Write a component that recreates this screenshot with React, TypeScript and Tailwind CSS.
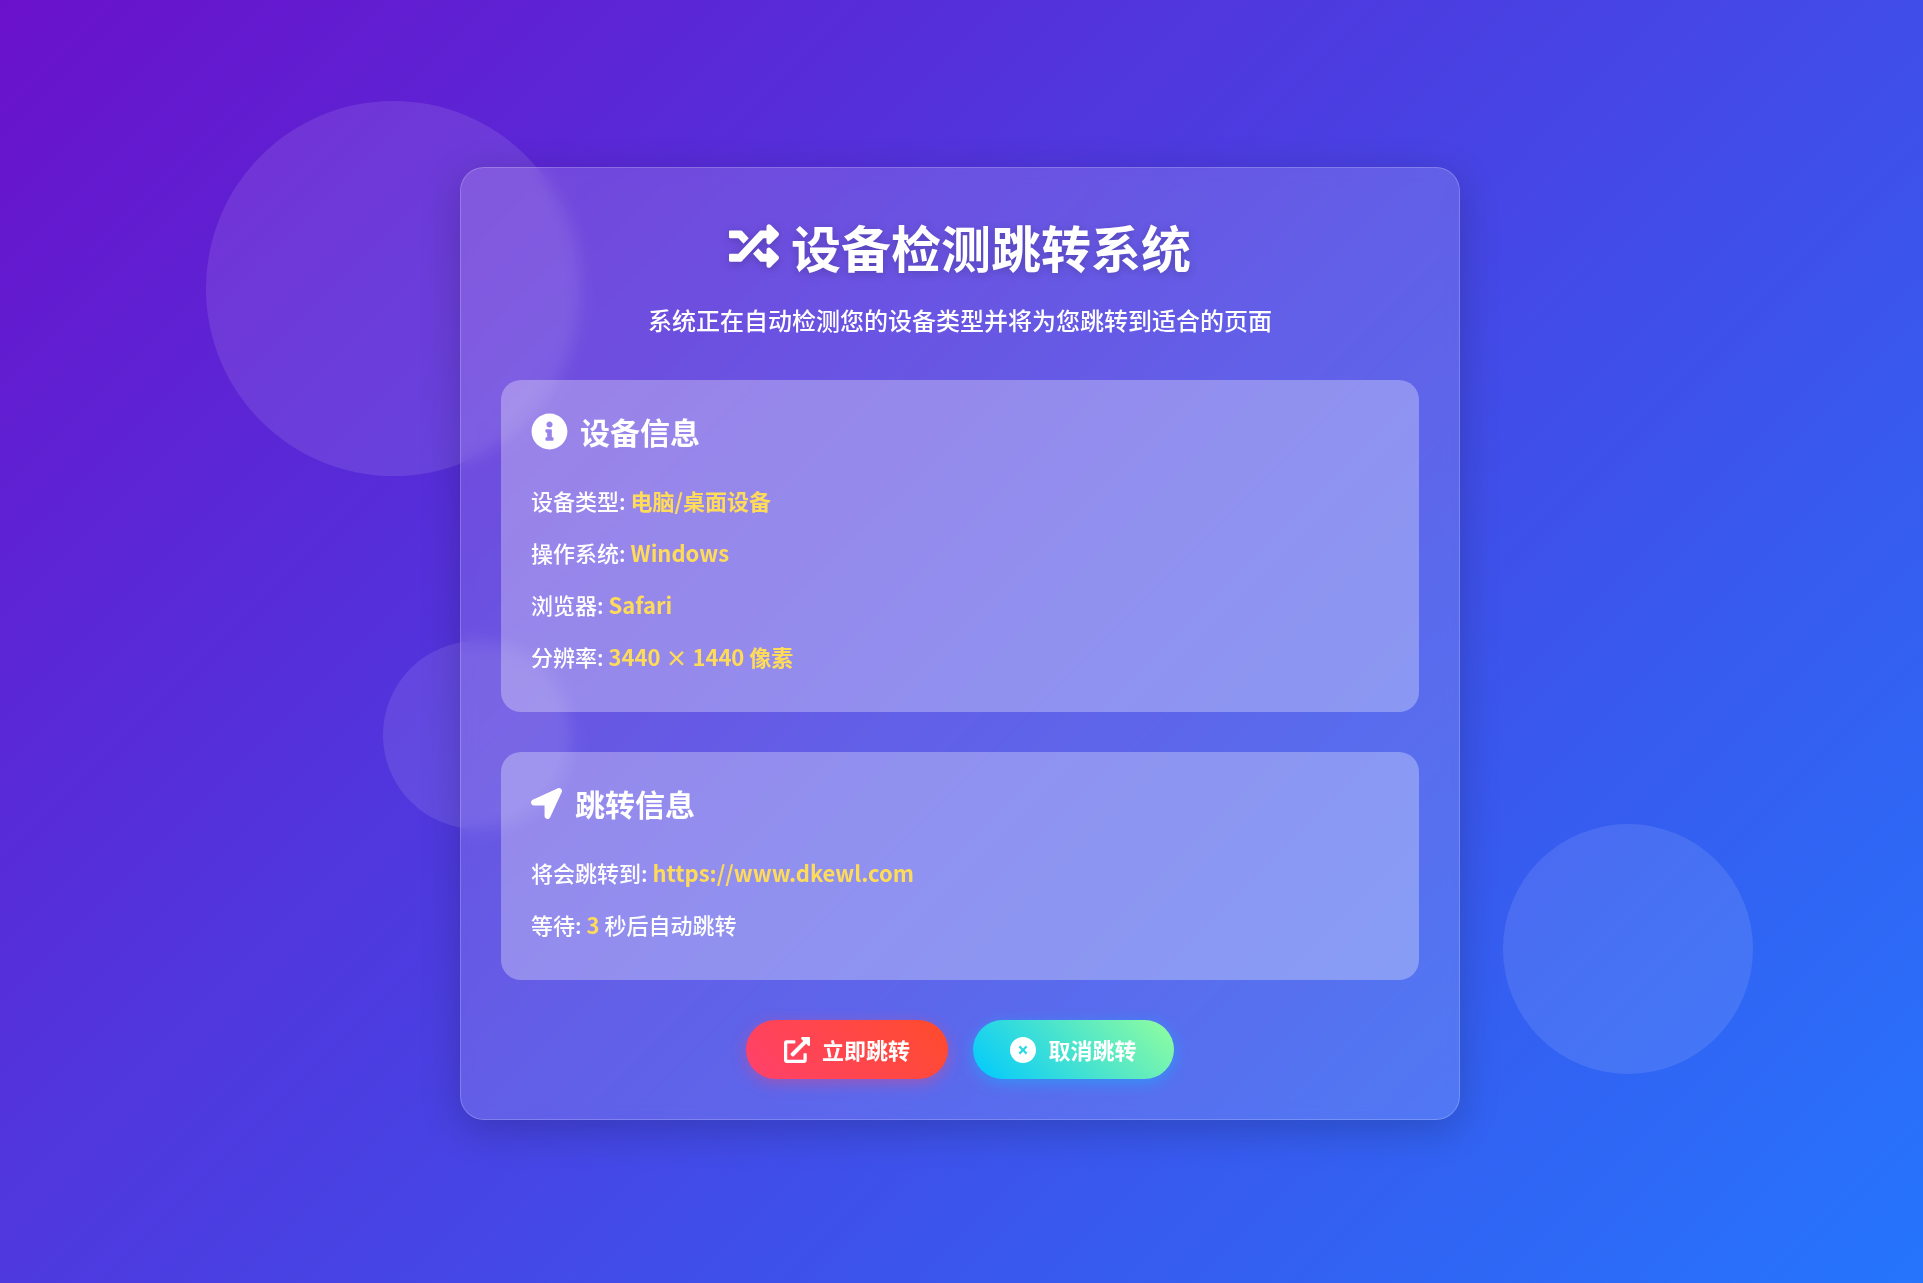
import { FaExternalLinkAlt, FaInfoCircle, FaLocationArrow, FaRandom } from "react-icons/fa";

function Row({ children }: { children: React.ReactNode }) {
  return <p className="mb-[15px] text-[22px] font-medium leading-[37px] text-white last:mb-0">{children}</p>;
}

function Val({ children }: { children: React.ReactNode }) {
  return <span className="font-bold text-[#ffdb5a]">{children}</span>;
}

export default function App() {
  return (
    <div className="relative flex min-h-screen items-center justify-center overflow-hidden bg-[linear-gradient(135deg,#6a11cb_0%,#2575fc_100%)] pr-[3px] pt-[4px] font-['Noto_Sans_CJK_SC','Noto_Sans',sans-serif]">
      <div className="absolute left-[206px] top-[101px] h-[375px] w-[375px] rounded-full bg-white/10" />
      <div className="absolute left-[383px] top-[641px] h-[188px] w-[188px] rounded-full bg-white/10" />
      <div className="absolute left-[1503px] top-[824px] h-[250px] w-[250px] rounded-full bg-white/10" />

      <div className="relative w-[1000px] rounded-[24px] border border-white/20 bg-white/15 p-[40px] shadow-[0_10px_40px_rgba(0,0,0,0.2)] backdrop-blur-[8px]">
        <h1 className="mt-[2px] flex items-center justify-center gap-[12px] text-[50px] font-bold leading-[72px] text-white [text-shadow:0_2px_10px_rgba(0,0,0,0.2)]">
          <FaRandom className="h-[50px] w-[50px] drop-shadow-[0_2px_5px_rgba(0,0,0,0.2)]" />
          设备检测跳转系统
        </h1>
        <p className="mt-[18px] text-center text-[24px] font-medium leading-[40px] text-white">
          系统正在自动检测您的设备类型并将为您跳转到适合的页面
        </p>

        <section className="mt-[40px] rounded-[20px] bg-white/30 px-[30px] pb-[37px] pt-[31px]">
          <h2 className="mb-[31px] flex items-center gap-[12px] text-[30px] font-bold leading-[40px] text-white">
            <FaInfoCircle className="h-[37px] w-[37px]" />
            设备信息
          </h2>
          <Row>设备类型: <Val>电脑/桌面设备</Val></Row>
          <Row>操作系统: <Val>Windows</Val></Row>
          <Row>浏览器: <Val>Safari</Val></Row>
          <Row>分辨率: <Val>3440 × 1440 像素</Val></Row>
        </section>

        <section className="mt-[40px] rounded-[20px] bg-white/30 px-[30px] pb-[37px] pt-[31px]">
          <h2 className="mb-[31px] flex items-center gap-[13px] text-[30px] font-bold leading-[40px] text-white">
            <FaLocationArrow className="h-[31px] w-[31px]" />
            跳转信息
          </h2>
          <Row>将会跳转到: <Val>https://www.dkewl.com</Val></Row>
          <Row>等待: <Val>3</Val> 秒后自动跳转</Row>
        </section>

        <div className="mt-[40px] flex justify-center gap-[25px]">
          <button className="flex h-[59px] w-[202px] items-center justify-center gap-[12px] rounded-full bg-[linear-gradient(45deg,#ff416c,#ff4b2b)] text-[22px] font-bold text-white shadow-[0_4px_15px_rgba(255,65,108,0.4)]">
            <FaExternalLinkAlt className="h-[26px] w-[26px]" />
            立即跳转
          </button>
          <button className="flex h-[59px] w-[201px] items-center justify-center gap-[12px] rounded-full bg-[linear-gradient(45deg,#00c9ff,#92fe9d)] text-[22px] font-bold text-white shadow-[0_4px_15px_rgba(0,201,255,0.4)]">
            <svg viewBox="0 0 26 26" className="h-[26px] w-[26px]" fill="currentColor">
              <path
                fillRule="evenodd"
                d="M13 0a13 13 0 1 0 0 26a13 13 0 1 0 0-26zM13 11.4L15.8 8.6L17.4 10.2L14.6 13L17.4 15.8L15.8 17.4L13 14.6L10.2 17.4L8.6 15.8L11.4 13L8.6 10.2L10.2 8.6z"
              />
            </svg>
            取消跳转
          </button>
        </div>
      </div>
    </div>
  );
}
